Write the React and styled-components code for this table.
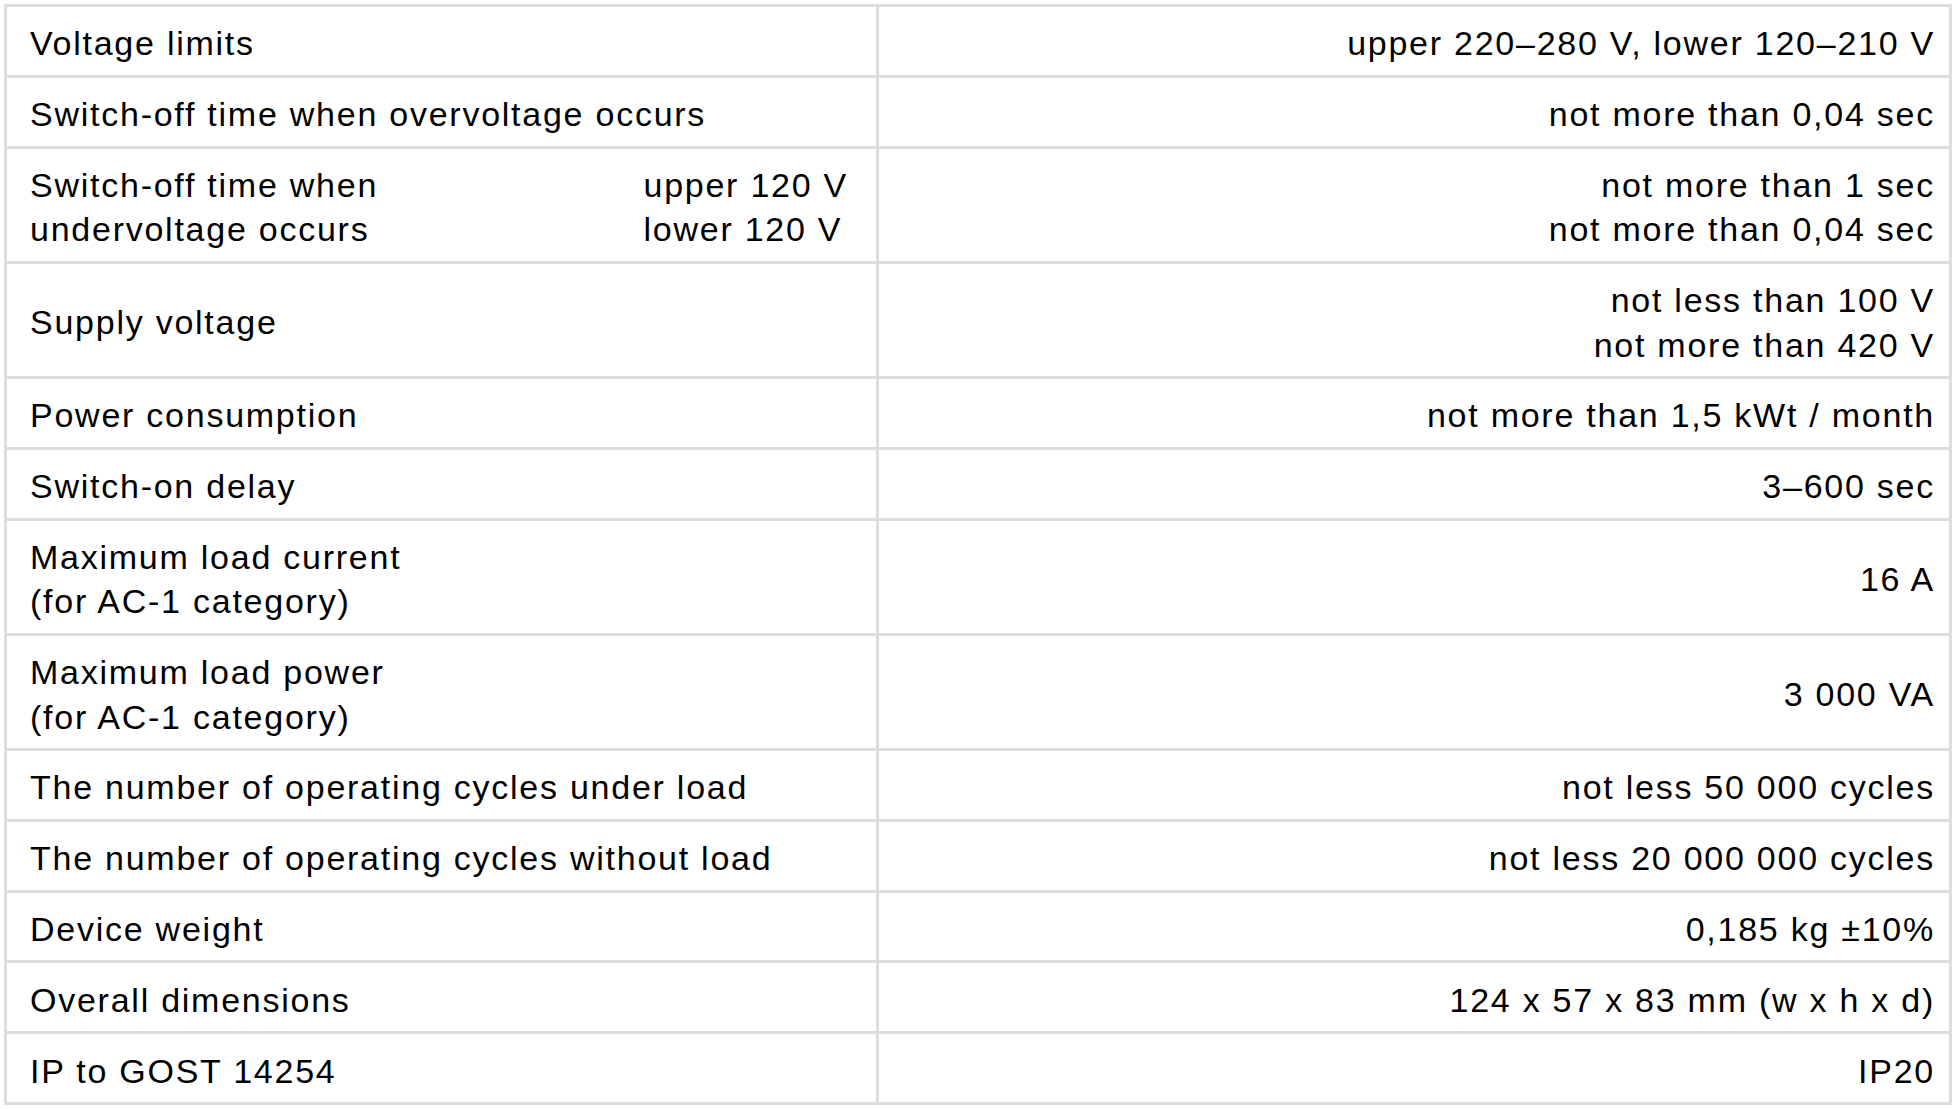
import React from "react";
import styled, { createGlobalStyle } from "styled-components";

const GlobalStyle = createGlobalStyle`
  html, body {
    margin: 0;
    padding: 0;
    background: #ffffff;
  }
  body {
    font-family: "Liberation Sans", Arial, Helvetica, sans-serif;
    color: #000000;
  }
`;

const Page = styled.div`
  padding: 4px;
`;

const Table = styled.table`
  width: 1948px;
  border-collapse: separate;
  border-spacing: 0;
  border-top: 3px solid #dddddd;
  border-left: 3px solid #dddddd;
  table-layout: fixed;
`;

const Row = styled.tr``;

const Cell = styled.td`
  border-right: 3px solid #dddddd;
  border-bottom: 3px solid #dddddd;
  padding: 14.4px ${(p) => (p.$right ? "14px" : "20px")} 9px
    ${(p) => (p.$right ? "20px" : "23px")};
  font-size: 34px;
  letter-spacing: 1.75px;
  line-height: 44.4px;
  text-align: ${(p) => (p.$right ? "right" : "left")};
  vertical-align: middle;
  width: ${(p) => (p.$right ? "auto" : "826px")};
  white-space: nowrap;
`;

const Split = styled.div`
  display: flex;
  justify-content: space-between;
  align-items: flex-start;
`;

const Sub = styled.div`
  text-align: left;
  margin-right: 8px;
`;

const Line = styled.div``;

const rows = [
  { label: ["Voltage limits"], value: ["upper 220–280 V, lower 120–210 V"] },
  { label: ["Switch-off time when overvoltage occurs"], value: ["not more than 0,04 sec"] },
  {
    label: ["Switch-off time when", "undervoltage occurs"],
    sub: ["upper 120 V", "lower 120 V"],
    value: ["not more than 1 sec", "not more than 0,04 sec"],
  },
  { label: ["Supply voltage"], value: ["not less than 100 V", "not more than 420 V"] },
  { label: ["Power consumption"], value: ["not more than 1,5 kWt / month"] },
  { label: ["Switch-on delay"], value: ["3–600 sec"] },
  { label: ["Maximum load current", "(for AC-1 category)"], value: ["16 A"] },
  { label: ["Maximum load power", "(for AC-1 category)"], value: ["3 000 VA"] },
  { label: ["The number of operating cycles under load"], value: ["not less 50 000 cycles"] },
  { label: ["The number of operating cycles without load"], value: ["not less 20 000 000 cycles"] },
  { label: ["Device weight"], value: ["0,185 kg ±10%"] },
  { label: ["Overall dimensions"], value: ["124 x 57 x 83 mm (w x h x d)"] },
  { label: ["IP to GOST 14254"], value: ["IP20"] },
];

const Lines = ({ items }) => items.map((t, i) => <Line key={i}>{t}</Line>);

export default function App() {
  return (
    <>
      <GlobalStyle />
      <Page>
        <Table>
          <tbody>
            {rows.map((r, i) => (
              <Row key={i}>
                <Cell>
                  {r.sub ? (
                    <Split>
                      <div>
                        <Lines items={r.label} />
                      </div>
                      <Sub>
                        <Lines items={r.sub} />
                      </Sub>
                    </Split>
                  ) : (
                    <Lines items={r.label} />
                  )}
                </Cell>
                <Cell $right>
                  <Lines items={r.value} />
                </Cell>
              </Row>
            ))}
          </tbody>
        </Table>
      </Page>
    </>
  );
}
